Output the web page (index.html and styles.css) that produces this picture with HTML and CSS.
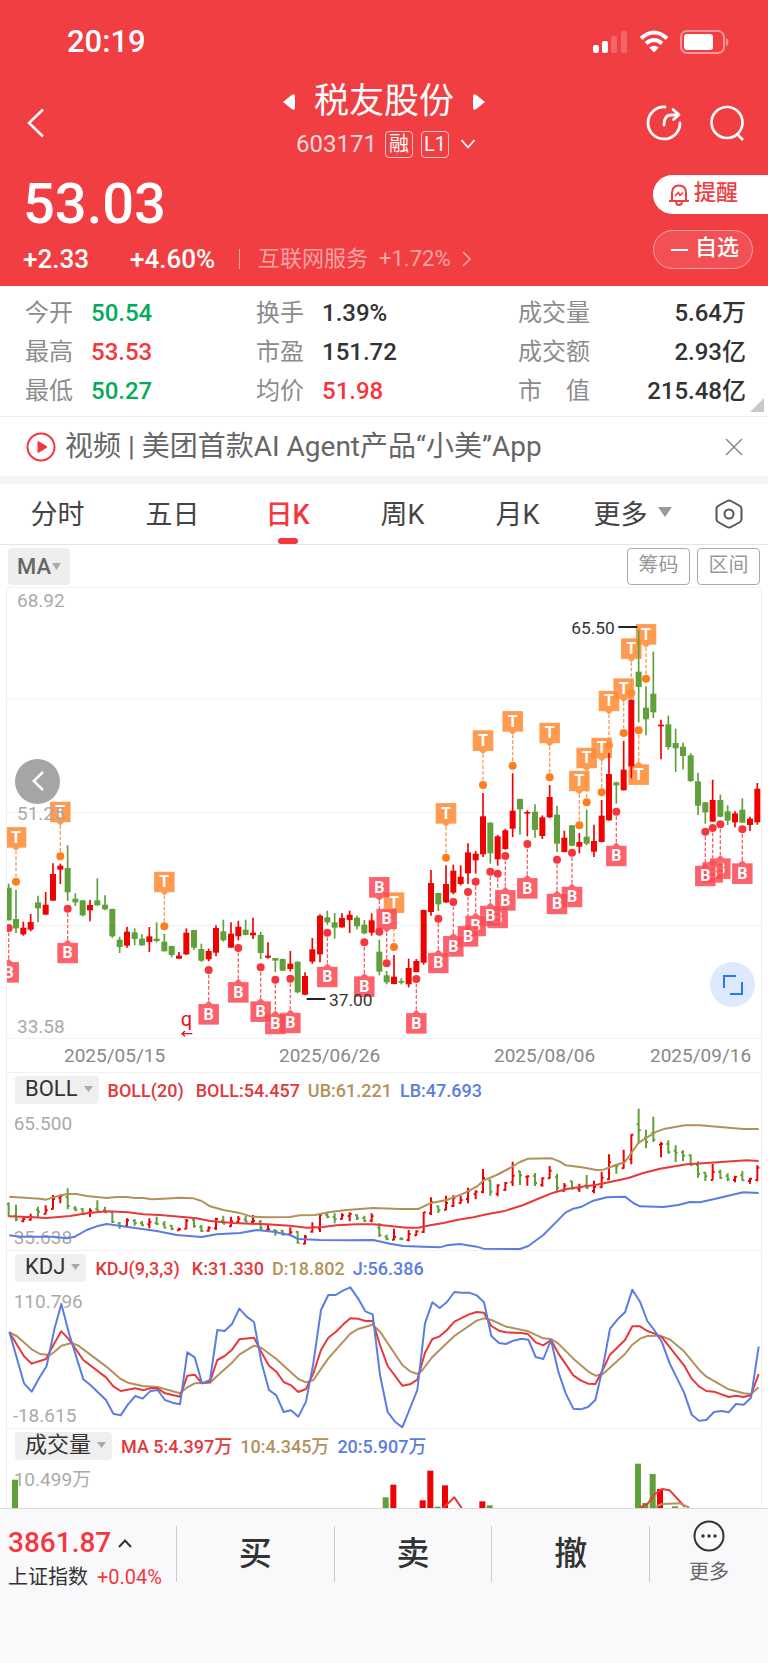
FILE: index.html
```html
<!DOCTYPE html>
<html lang="zh-CN">
<head>
<meta charset="utf-8">
<meta name="viewport" content="width=device-width, initial-scale=1">
<title>税友股份 603171</title>
<link rel="stylesheet" href="styles.css">
</head>
<body>
<header class="top">
  <div class="status">
    <span class="clock">20:19</span>
    <span class="status-icons">
      <svg width="35" height="24" viewBox="0 0 35 24" fill="#fff" aria-hidden="true"><rect x="0" y="15" width="6" height="8" rx="2"/><rect x="9" y="11" width="6" height="12" rx="2"/><g opacity=".2"><rect x="18" y="6" width="6" height="17" rx="2"/><rect x="28" y="1" width="6" height="22" rx="2"/></g></svg>
      <svg width="30" height="24" viewBox="0 0 30 24" fill="none" stroke="#fff" stroke-width="4" aria-hidden="true"><path d="M2 8.500Q15-3.500 28 8.500M7 13.500Q15 6.500 23 13.500"/><path d="M15 22.500L10.300 17.500Q15 13.800 19.700 17.500Z" fill="#fff" stroke="none"/></svg>
      <svg width="50" height="24" viewBox="0 0 50 24" aria-hidden="true"><rect x="1" y="1" width="43" height="22" rx="6" fill="none" stroke="#fff" stroke-opacity=".45" stroke-width="2"/><rect x="4" y="4" width="29" height="16" rx="3" fill="#fff"/><path d="M46 8Q48.500 9 48.500 12T46 16Z" fill="#fff" fill-opacity=".45"/></svg>
    </span>
  </div>
  <div class="title-bar">
    <button class="icon-btn back" aria-label="返回"><svg width="18" height="30" viewBox="0 0 18 30" fill="none" stroke="#fff" stroke-width="2.500"><path d="M16 1.500L2 15L16 28.500"/></svg></button>
    <div class="title">
      <div class="name-row">
        <button class="icon-btn" aria-label="上一只"><svg width="12" height="16" viewBox="0 0 12 16" fill="#fff"><path d="M0 8L9 .8Q12-.5 12 2V14Q12 16.500 9 15.200Z"/></svg></button>
        <h1>税友股份</h1>
        <button class="icon-btn" aria-label="下一只"><svg width="12" height="16" viewBox="0 0 12 16" fill="#fff"><path d="M12 8L3 .8Q0-.5 0 2V14Q0 16.500 3 15.200Z"/></svg></button>
      </div>
      <div class="code-row">
        <span class="code">603171</span><span class="tag tag-cn">融</span><span class="tag">L1</span>
        <svg class="code-more" width="16" height="10" viewBox="0 0 16 10" fill="none" stroke="#fff" stroke-width="1.800" aria-hidden="true"><path d="M1.500 1L8 8.500L14.500 1"/></svg>
      </div>
    </div>
    <div class="actions">
      <button class="icon-btn" aria-label="分享"><svg width="36" height="36" viewBox="0 0 36 36" fill="none" stroke="#fff" stroke-width="2.800" stroke-linecap="round"><path d="M19 2A16 16 0 1 0 34 18"/><path d="M18 20Q18 10 25 10H31" /><path d="M27 4.500L33 9.800L27.500 14.500" stroke-linejoin="round"/></svg></button>
      <button class="icon-btn" aria-label="搜索"><svg width="36" height="36" viewBox="0 0 36 36" fill="none" stroke="#fff" stroke-width="2.600"><circle cx="18" cy="17.500" r="15.500"/><path d="M28 29L34 35"/></svg></button>
    </div>
  </div>
  <div class="quote">
    <div class="price-box">
      <div class="price">53.03</div>
      <div class="change">
        <span class="diff">+2.33</span><span class="rate">+4.60%</span>
        <a class="sector" href="#sector"><span>互联网服务</span><span>+1.72%</span><svg width="9" height="16" viewBox="0 0 9 16" fill="none" stroke="currentColor" stroke-width="1.600"><path d="M1 1L8 8L1 15"/></svg></a>
      </div>
    </div>
    <div class="pills">
      <button class="pill pill-alert"><svg width="22" height="22" viewBox="0 0 22 22" fill="none" stroke="#f03e42" stroke-width="2"><path d="M4 16.500V9Q4 1.500 11 1.500T18 9V16.500M1 17H21"/><path d="M8 18Q8.500 21 11 21T14 18"/><path d="M7 12L10.500 8.500L12 11.500L15 8.500" stroke-width="1.600"/></svg><span>提醒</span></button>
      <button class="pill pill-watch"><svg width="19" height="22" viewBox="0 0 19 22" stroke="#fff" stroke-width="2"><path d="M1 11H18"/></svg><span>自选</span></button>
    </div>
  </div>
</header>

<section class="stats">
  <dl><dt>今开</dt><dd class="down">50.54</dd><dt>最高</dt><dd class="up">53.53</dd><dt>最低</dt><dd class="down">50.27</dd></dl>
  <dl><dt>换手</dt><dd>1.39%</dd><dt>市盈</dt><dd>151.72</dd><dt>均价</dt><dd class="up">51.98</dd></dl>
  <dl class="totals"><dt>成交量</dt><dd>5.64万</dd><dt>成交额</dt><dd>2.93亿</dd><dt>市　值</dt><dd>215.48亿</dd></dl>
  <svg class="corner" width="14" height="14" viewBox="0 0 14 14" aria-hidden="true"><path d="M14 0V14H0Z" fill="#c8c8c8"/></svg>
</section>

<section class="news">
  <a href="#news"><svg width="30" height="30" viewBox="0 0 30 30"><circle cx="15" cy="15" r="13.500" fill="none" stroke="#f5363f" stroke-width="2"/><path d="M11.500 10Q11.500 8.500 13 9.400L20.500 14Q21.800 15 20.500 16L13 20.600Q11.500 21.500 11.500 20Z" fill="#f5363f"/></svg><span>视频 | 美团首款AI Agent产品“小美”App</span></a>
  <button class="icon-btn" aria-label="关闭"><svg width="18" height="18" viewBox="0 0 18 18" stroke="#888" stroke-width="1.500"><path d="M1 1L17 17M17 1L1 17"/></svg></button>
</section>

<nav class="tabs">
  <button>分时</button><button>五日</button><button class="active">日K</button><button>周K</button><button>月K</button>
  <button>更多<svg width="14" height="10" viewBox="0 0 14 10"><path d="M0 0H14L7 10Z" fill="#999"/></svg></button>
  <button aria-label="设置"><svg width="28" height="30" viewBox="0 0 28 30" fill="none" stroke="#555" stroke-width="2"><path d="M12 2Q14 .8 16 2L25 7Q26.500 8 26.500 10V20Q26.500 22 25 23L16 28Q14 29.200 12 28L3 23Q1.500 22 1.500 20V10Q1.500 8 3 7Z"/><circle cx="14" cy="15" r="4.500"/></svg></button>
</nav>

<main>
  <div class="toolbar">
    <button class="ma">MA<svg width="9" height="7" viewBox="0 0 9 7"><path d="M0 0H9L4.500 7Z" fill="#aaa"/></svg></button>
    <span class="tools"><button>筹码</button><button>区间</button></span>
  </div>
  <div class="charts">
    <div class="plot">
      <svg id="kline" viewBox="21 22 2262 1356" role="img" aria-label="日K线"></svg>
      <button class="round prev" aria-label="向前"><svg width="12" height="20" viewBox="0 0 12 20" fill="none" stroke="#fff" stroke-width="2.500"><path d="M11 1L1.800 10L11 19"/></svg></button>
      <button class="round full" aria-label="全屏"><svg width="20" height="20" viewBox="0 0 20 20" fill="none" stroke="#2676f8" stroke-width="2"><path d="M13 1H1V13M7 19H19V7"/></svg></button>
    </div>
    <div class="dates"><span>2025/05/15</span><span>2025/06/26</span><span>2025/08/06</span><span>2025/09/16</span></div>
    <section class="panel">
      <div class="panel-head"><button class="chip">BOLL<svg width="9" height="6" viewBox="0 0 9 6"><path d="M0 0H9L4.500 6Z" fill="#aaa"/></svg></button><span class="legend"><span class="c-red lead">BOLL(20)</span><span class="c-red">BOLL:54.457</span><span class="c-tan">UB:61.221</span><span class="c-blue">LB:47.693</span></span></div>
      <svg id="boll" viewBox="21 192 2262 438" role="img" aria-label="BOLL"></svg>
    </section>
    <section class="panel">
      <div class="panel-head"><button class="chip">KDJ<svg width="9" height="6" viewBox="0 0 9 6"><path d="M0 0H9L4.500 6Z" fill="#aaa"/></svg></button><span class="legend"><span class="c-red lead">KDJ(9,3,3)</span><span class="c-red">K:31.330</span><span class="c-tan">D:18.802</span><span class="c-blue">J:56.386</span></span></div>
      <svg id="kdj" viewBox="21 96 2262 438" role="img" aria-label="KDJ"></svg>
    </section>
    <section class="panel">
      <div class="panel-head"><button class="chip">成交量<svg width="9" height="6" viewBox="0 0 9 6"><path d="M0 0H9L4.500 6Z" fill="#aaa"/></svg></button><span class="legend"><span class="c-red">MA 5:4.397万</span><span class="c-tan">10:4.345万</span><span class="c-blue">20:5.907万</span></span></div>
      <svg id="volume" viewBox="21 631 2262 144" role="img" aria-label="成交量"></svg>
    </section>
  </div>
</main>

<footer class="trade">
  <a class="index" href="#index">
    <span class="index-value">3861.87<svg width="14" height="9" viewBox="0 0 14 9" fill="none" stroke="#333" stroke-width="2"><path d="M1 8L7 1.500L13 8"/></svg></span>
    <span class="index-name">上证指数<em>+0.04%</em></span>
  </a>
  <button>买</button><button>卖</button><button>撤</button>
  <button class="more"><svg width="32" height="32" viewBox="0 0 32 32" fill="none" stroke="#333" stroke-width="2"><circle cx="16" cy="16" r="14.500"/><g fill="#333" stroke="none"><circle cx="10" cy="16" r="1.700"/><circle cx="16" cy="16" r="1.700"/><circle cx="22" cy="16" r="1.700"/></g></svg>更多</button>
</footer>
<script src="chart.js"></script>
</body>
</html>
```
FILE: styles.css
```css
* { box-sizing: border-box; }
body {
  margin: 0;
  min-height: 100vh;
  display: flex;
  flex-direction: column;
  background: #fff;
  color: #333;
  font-family: Roboto, "Noto Sans CJK SC", sans-serif;
}
button {
  margin: 0;
  padding: 0;
  border: 0;
  background: none;
  color: inherit;
  font: inherit;
}
a { color: inherit; text-decoration: none; }
svg { display: block; flex: none; }
.icon-btn { display: flex; }

/* red header */
.top { background: #f03e42; color: #fff; padding-bottom: 5px; }
.status {
  display: flex;
  align-items: center;
  justify-content: space-between;
  height: 82px;
  padding: 2px 38px 0 67px;
}
.clock { font-size: 31px; font-weight: 500; line-height: 40px; }
.status-icons { display: flex; gap: 11px; }
.title-bar {
  display: grid;
  grid-template-columns: 1fr auto 1fr;
  align-items: center;
  height: 82px;
  padding: 0 23px 0 27px;
}
.title { display: flex; flex-direction: column; align-items: center; gap: 2px; }
.name-row { display: flex; align-items: center; gap: 19px; height: 40px; padding-right: 4px; }
h1 { margin: 0; font-size: 35px; font-weight: 400; line-height: 40px; }
.code-row { display: flex; align-items: center; height: 40px; gap: 8px; }
.code { font-size: 24px; opacity: .8; }
.tag {
  width: 28px;
  height: 27px;
  border: 1px solid #fbc5c6;
  border-radius: 4px;
  font-size: 20px;
  line-height: 25px;
  text-align: center;
}
.code-more { margin-left: 3px; }
.actions { display: flex; justify-content: flex-end; gap: 27px; }
.quote { display: flex; justify-content: space-between; }
.price-box { padding: 8px 0 0 23px; }
.price { font-size: 56px; font-weight: 500; line-height: 64px; }
.change { display: flex; align-items: center; height: 45px; font-size: 26px; font-weight: 500; }
.diff { width: 107px; }
.rate { width: 109px; }
.sector {
  display: flex;
  align-items: center;
  gap: 11px;
  color: #f8a4a5;
  font-size: 22px;
  font-weight: 400;
  line-height: 28px;
}
.sector::before { content: ""; width: 1px; height: 20px; margin-right: 7px; background: #f8a4a5; }
.pills { display: flex; flex-direction: column; gap: 16px; width: 115px; padding-top: 11px; }
.pill { display: flex; align-items: center; height: 39px; font-size: 22px; font-weight: 500; gap: 4px; line-height: 28px; }
.pill span { padding-bottom: 4px; }
.pill-alert { border-radius: 20px 0 0 20px; padding-left: 15px; background: #fff; color: #f03e42; }
.pill-watch {
  width: 100px;
  border: 1px solid #f7a0a2;
  border-radius: 20px;
  padding-left: 16px;
  gap: 6px;
  background: #f25054;
}

/* key figures */
.stats {
  position: relative;
  display: grid;
  grid-template-columns: 231px 1fr 228px;
  padding: 7px 22px 6px 25px;
  border-bottom: 1px solid #eee;
}
.stats dl {
  display: grid;
  grid-template-columns: 66px 1fr;
  grid-auto-rows: 39px;
  align-items: center;
  margin: 0;
  line-height: 36px;
}
.stats dt { color: #8c8c8c; font-size: 24px; }
.stats dd { margin: 0; font-size: 24px; font-weight: 500; }
.stats .totals { grid-template-columns: 80px 1fr; }
.totals dd { text-align: right; }
.stats .up { color: #f5363f; }
.stats .down { color: #04ab5b; }
.corner { position: absolute; right: 4px; bottom: 4px; }

.news {
  display: flex;
  align-items: center;
  justify-content: space-between;
  height: 67px;
  padding: 0 25px 0 26px;
  border-bottom: 8px solid #f1f4f8;
}
.news a { display: flex; align-items: center; gap: 9px; color: #666; font-size: 28px; line-height: 40px; }

.tabs {
  display: grid;
  grid-template-columns: repeat(6, 1fr) 78px;
  height: 61px;
  border-bottom: 1px solid #e4e4e4;
  font-size: 27px;
}
.tabs button { position: relative; display: flex; align-items: center; justify-content: center; gap: 10px; padding-bottom: 4px; color: #444; }
.tabs button:last-child { padding-bottom: 0; }
.tabs .active { color: #f5363f; font-weight: 500; }
.tabs .active::after {
  content: "";
  position: absolute;
  bottom: 0;
  width: 20px;
  height: 6px;
  border-radius: 3px;
  background: #f5363f;
}

/* charts */
.toolbar { display: flex; align-items: center; justify-content: space-between; height: 42px; padding: 0 8px; }
.ma {
  display: flex;
  align-items: center;
  justify-content: center;
  gap: 1px;
  width: 62px;
  height: 37px;
  border-radius: 4px;
  background: #eee;
  color: #666;
  font-size: 22px;
  font-weight: 500;
}
.tools { display: flex; gap: 7px; }
.tools button { width: 63px; height: 37px; padding-bottom: 2px; border: 1px solid #aaa; border-radius: 4px; color: #999; font-size: 20px; line-height: 28px; }
.charts { margin: 0 6px; border: solid #f0f0f0; border-width: 0 1px; }
.charts > div > svg, .panel > svg { width: 100%; height: auto; overflow: hidden; }
.plot { position: relative; }
.round {
  position: absolute;
  display: flex;
  align-items: center;
  justify-content: center;
  width: 45px;
  height: 45px;
  border-radius: 50%;
}
.prev { left: 8px; top: 38%; background: #a5a5a5; }
.full { right: 6px; bottom: 7%; background: #dfe9fd; }
.dates {
  display: grid;
  grid-template-columns: 215fr 215fr 156fr 111fr;
  height: 33px;
  padding-left: 57px;
  color: #888;
  font-size: 19px;
  line-height: 34px;
}
.panel-head {
  display: flex;
  align-items: flex-end;
  height: 32px;
  padding-left: 8px;
  border-top: 1px solid #f0f0f0;
  gap: 9px;
}
.chip {
  display: flex;
  align-items: center;
  gap: 6px;
  height: 28px;
  padding: 0 6px 2px 10px;
  border-radius: 4px;
  background: #efefef;
  font-size: 22px;
  line-height: 26px;
}
.legend { display: flex; gap: 8px; font-size: 18px; font-weight: 500; line-height: 26px; }
.lead { margin-right: 4px; }
.c-red { color: #e2383c; }
.c-tan { color: #b3915b; }
.c-blue { color: #5b7de2; }

/* chart drawing */
.grid { stroke: #f0f0f0; stroke-width: 3; }
.axis { fill: #aaa; font-size: 57px; }
.callout { fill: #333; font-size: 52px; }
.callout-line { stroke: #222; stroke-width: 6; }
.note { fill: #e8111a; font-size: 60px; }
.note-line { fill: none; stroke: #e8111a; stroke-width: 4; }
.up-bar { fill: #ee0303; stroke: #ee0303; }
.down-bar { fill: #60a03a; stroke: #60a03a; }
.up-bar rect, .down-bar rect { stroke: none; }
.wick { stroke-width: 5; }
.ohlc { fill: none; stroke-width: 6; }
.curve { fill: none; stroke-width: 6; stroke-linejoin: round; }
.s-red { stroke: #e8383c; }
.s-tan { stroke: #b3915b; }
.s-blue { stroke: #5b7de2; }
.mark-T { fill: #ff8b37; stroke: #ff9a50; }
.mark-B { fill: #fa4b55; stroke: #fb6069; }
.mark-T circle { fill: #ff7d1c; }
.mark-B circle { fill: #f5363f; }
.mark-T circle, .mark-B circle { stroke: none; }
.stem { stroke-width: 4; stroke-dasharray: 11 6; }
.badge { stroke: #fff; stroke-opacity: .5; stroke-width: 1; fill-opacity: .87; }
.badge-text { fill: #fff; stroke: none; font-size: 48px; font-weight: 700; text-anchor: middle; }

/* bottom bar */
.trade {
  flex: 1;
  display: grid;
  grid-template-columns: 176px 1fr 1fr 1fr 119px;
  align-items: start;
  padding-top: 17px;
  border-top: 1px solid #d8dadd;
  background: #f9f9fc;
}
.trade > * { height: 56px; }
.trade > button { border-left: 1px solid #ccc; font-size: 33px; font-weight: 500; line-height: 56px; }
.index { display: flex; flex-direction: column; padding-left: 8px; }
.index-value { display: flex; align-items: center; gap: 7px; color: #f5363f; font-size: 28px; font-weight: 500; line-height: 34px; }
.index-name { display: flex; align-items: center; gap: 9px; font-size: 20px; line-height: 34px; white-space: nowrap; }
.index-name em { color: #f5363f; font-style: normal; }
.trade > .more {
  display: flex;
  flex-direction: column;
  align-items: center;
  gap: 6px;
  color: #666;
  font-size: 20px;
  font-weight: 400;
  line-height: 28px;
}
.more svg { margin-top: -6px; }
```
FILE: chart.js
```js
// Each candle: direction (1 up, 0 down), high, body top, body bottom, low.
const candles = [
[0,912,924,1022,1022],[0,930,1018,1046,1060],[1,1026,1044,1064,1068],[1,1003,1027,1050,1055],[0,948,968,986,1028],
[1,937,975,1005,1005],[1,851,883,963,963],[1,852,858,870,913],[0,797,865,938,964],[0,941,957,968,979],
[0,961,962,1007,1010],[1,961,976,992,1025],[0,896,962,977,978],[0,947,975,989,992],[0,987,988,1070,1075],
[0,1071,1080,1102,1120],[1,1041,1056,1098,1104],[0,1046,1058,1078,1097],[0,1064,1077,1097,1098],[1,1042,1070,1087,1117],
[0,1028,1077,1084,1088],[0,1062,1086,1115,1115],[0,1098,1099,1126,1133],[1,1117,1128,1137,1137],[1,1046,1059,1124,1126],
[0,1050,1051,1104,1111],[0,1092,1108,1143,1147],[1,1107,1114,1139,1145],[1,1037,1045,1119,1130],[0,1020,1055,1082,1086],
[1,1028,1062,1104,1104],[1,1023,1041,1070,1082],[0,1020,1050,1066,1067],[1,1014,1059,1067,1078],[0,1056,1066,1120,1138],
[1,1088,1128,1134,1137],[0,1135,1135,1143,1177],[0,1137,1138,1173,1174],[1,1114,1152,1168,1175],[0,1145,1146,1238,1241],
[1,1178,1189,1245,1247],[1,1075,1109,1146,1152],[1,1004,1008,1124,1148],[0,993,1013,1028,1035],[0,1000,1028,1044,1077],
[1,1001,1015,1043,1044],[1,993,1005,1021,1060],[0,1008,1014,1040,1049],[0,1021,1035,1061,1064],[1,1001,1022,1059,1068],
[0,1080,1116,1176,1187],[0,1174,1187,1208,1214],[1,1126,1191,1213,1214],[0,1196,1204,1208,1214],[1,1137,1165,1214,1223],
[1,1138,1144,1177,1178],[1,990,991,1149,1155],[1,871,910,997,1008],[0,939,940,974,994],[1,857,913,968,970],
[1,855,873,939,944],[1,857,891,913,917],[1,791,818,881,913],[1,814,822,842,882],[1,640,710,824,832],
[0,728,729,821,852],[1,766,770,839,858],[1,747,752,808,810],[1,581,693,747,772],[0,657,658,689,765],
[1,692,697,702,770],[0,674,696,751,774],[1,707,713,769,778],[1,616,652,713,715],[0,678,705,792,817],
[1,753,774,817,818],[0,736,737,798,800],[1,760,787,801,821],[0,690,771,792,796],[1,735,784,816,832],
[1,661,708,787,788],[1,520,583,722,723],[0,606,608,617,672],[1,484,570,632,632],[1,359,360,560,596],
[0,150,276,322,428],[0,320,384,419,467],[0,216,342,398,415],[1,420,435,440,539],[0,408,434,502,510],
[0,447,490,506,577],[0,489,501,529,569],[0,521,527,604,607],[0,579,605,678,706],[0,667,668,698,732],
[1,600,661,726,726],[0,645,661,711,713],[0,677,695,723,736],[1,695,701,728,743],[0,656,690,729,729],
[1,711,717,736,754],[1,610,627,728,735]
];
const STEP = 22.24;
const xAt = i => Math.round(25.5 + i * STEP);

// Signals: letter, candle index, dot position, side of the badge (-1 above, 1 below).
const marks = [
['B',99,749,1],['B',96,734,1],['B',95,745,1],['B',94,756,1],['B',82,696,1],['B',76,819,1],['B',74,840,1],['B',70,793,1],
['B',66,882,1],['B',67,829,1],['B',65,876,1],['B',63,906,1],['B',62,937,1],['B',60,967,1],['B',58,1017,1],['B',55,1198,1],
['T',52,1102,-1],['B',51,1151,-1],['B',50,1056,-1],['B',48,1088,1],['B',43,1059,1],['B',38,1197,1],['B',36,1200,1],['B',34,1163,1],
['B',31,1105,1],['B',27,1171,1],['B',8,987,1],['B',0,1045,1],
['T',86,297,-1],['T',85,452,1],['T',84,340,-1],['T',83,460,-1],['T',81,497,-1],['T',80,638,-1],['T',78,668,-1],['T',77,737,-1],
['T',73,593,-1],['T',68,558,-1],['T',64,616,-1],['T',59,834,-1],['T',21,1040,-1],['T',7,830,-1],['T',1,906,-1]
];

const text = (cls, x, y, s) => `<text class="${cls}" x="${x}" y="${y}">${s}</text>`;
const curve = (cls, pts) => `<polyline class="curve ${cls}" points="${pts}"/>`;

function drawMark([letter, i, y, side]) {
  const x = xAt(i);
  const near = y + side * 102, far = y + side * 164, tip = y + side * 92;
  return `<g class="mark-${letter}"><path class="stem" d="M${x} ${y + side * 14}V${tip}"/>` +
    `<path class="badge" d="M${x - 31} ${near}H${x - 11}L${x} ${tip}L${x + 11} ${near}H${x + 31}V${far}H${x - 31}Z"/>` +
    `<circle cx="${x}" cy="${y}" r="12"/>` +
    text('badge-text', x, (near + far) / 2 + 16, letter) + '</g>';
}

function drawCandle([up, high, top, bottom, low], i) {
  const x = xAt(i);
  return `<g class="${up ? 'up-bar' : 'down-bar'}"><path class="wick" d="M${x} ${high}V${low}"/>` +
    `<rect x="${x - 9}" y="${top}" width="18" height="${Math.max(bottom - top, 5)}"/></g>`;
}

let kline = [358, 698, 1037, 1376, 23].map(y => `<path class="grid" d="M21 ${y}H2283"/>`).join('');
kline += marks.map(drawMark).join('') + candles.map(drawCandle).join('');
kline += text('axis', 51, 83, '68.92') + text('axis', 51, 721, '51.25') + text('axis', 51, 1360, '33.58');
kline += text('callout', 1714, 163, '65.50') + '<path class="callout-line" d="M1855 142H1912"/>';
kline += text('callout', 987, 1279, '37.00') + '<path class="callout-line" d="M920 1258H976"/>';
kline += text('note', 542, 1338, 'q') + '<path class="note-line" d="M577 1362H546M555 1354L546 1362L555 1370"/>';
document.getElementById('kline').innerHTML = kline;

const bollY = y => Math.round(207 + (y - 150) * 0.369);
let boll = text('axis', 41, 270, '65.500') + text('axis', 41, 612, '35.638');
boll += candles.map(([up, high, top, bottom, low], i) => {
  const x = xAt(i), open = bollY(up ? bottom : top), close = bollY(up ? top : bottom);
  return `<path class="ohlc ${up ? 'up-bar' : 'down-bar'}" d="M${x} ${bollY(high) - 1}V${bollY(low) + 1}M${x - 6} ${open}H${x}M${x} ${close}H${x + 6}"/>`;
}).join('');
boll += curve('s-tan', '28,470 120,476 138,479 158,473 180,466 205,462 230,462 260,468 320,474 350,471 380,471 405,474 430,474 455,478 490,476 540,473 580,475 605,483 630,499 670,510 715,518 755,530 800,532 870,531 900,526 945,525 985,517 1040,510 1080,507 1120,504 1200,507 1255,507 1290,490 1340,480 1390,461 1430,440 1450,422 1490,405 1530,384 1560,366 1585,356 1655,355 1680,365 1697,376 1745,382 1790,390 1810,389 1840,378 1875,366 1915,309 1940,293 1970,275 1995,266 2055,256 2100,256 2160,261 2230,267 2276,267');
boll += curve('s-red', '28,529 100,532 140,534 210,528 260,520 320,514 385,517 430,523 480,525 540,530 590,535 630,543 700,549 800,553 870,557 920,563 970,561 1010,556 1070,553 1120,553 1170,558 1220,563 1255,563 1290,556 1330,549 1370,540 1420,532 1460,523 1510,514 1570,495 1620,474 1660,458 1700,447 1740,441 1790,434 1830,426 1885,414 1930,399 1980,386 2060,373 2120,369 2240,361 2276,363');
boll += curve('s-blue', '28,586 60,590 160,590 200,595 225,590 260,570 290,559 320,552 400,563 470,573 530,585 605,591 650,583 720,579 770,570 820,575 870,585 895,597 960,600 1040,601 1120,600 1170,611 1210,618 1270,620 1320,622 1340,616 1380,612 1430,620 1450,626 1560,627 1585,618 1630,585 1670,545 1697,517 1720,506 1745,500 1780,482 1820,472 1875,470 1900,489 1920,499 1990,501 2035,495 2070,486 2100,487 2140,478 2230,457 2276,459');
document.getElementById('boll').innerHTML = boll;

let kdj = text('axis', 41, 175, '110.796') + text('axis', 38, 517, '-18.615');
kdj += curve('s-tan', '28,247 50,258 95,298 120,312 150,315 163,306 184,287 215,279 235,287 318,349 362,387 384,398 428,408 473,411 540,430 562,412 584,400 630,398 652,377 696,338 718,314 762,287 785,294 829,327 895,387 918,397 940,390 985,325 1051,251 1074,237 1118,224 1140,245 1207,345 1230,364 1252,372 1265,363 1297,321 1363,258 1430,212 1452,205 1474,210 1518,230 1585,244 1630,265 1653,267 1675,281 1720,326 1764,364 1786,377 1808,373 1875,312 1897,284 1920,266 1942,258 1980,257 2009,268 2052,304 2097,359 2119,380 2186,418 2231,430 2253,432 2276,412');
kdj += curve('s-red', '28,247 72,319 95,341 138,327 163,280 184,244 207,268 250,330 318,382 340,409 362,423 406,415 430,421 453,414 473,415 495,430 540,440 562,377 584,374 606,400 630,395 652,330 674,318 696,299 718,268 762,263 785,308 807,347 829,365 851,396 873,406 895,426 918,417 940,370 963,300 985,263 1007,246 1030,223 1051,205 1074,206 1096,213 1118,213 1140,285 1163,348 1207,407 1230,403 1252,389 1275,308 1297,267 1319,259 1341,240 1363,215 1407,193 1430,186 1452,188 1474,228 1497,242 1518,247 1565,249 1585,253 1607,277 1630,286 1653,270 1675,310 1720,376 1742,391 1764,401 1786,402 1808,360 1830,314 1875,270 1897,229 1920,229 1942,243 1964,251 1986,262 2052,346 2075,386 2097,409 2119,423 2142,425 2186,441 2208,437 2231,441 2253,435 2276,372');
kdj += curve('s-blue', '28,245 72,400 95,425 118,383 140,348 163,238 184,162 207,250 250,388 272,406 318,450 340,491 362,496 384,463 406,438 428,446 450,424 473,420 495,450 517,458 540,463 562,307 584,322 606,400 630,390 652,240 674,243 696,222 718,176 740,200 762,216 785,340 807,420 829,436 851,486 873,481 895,500 918,455 940,340 963,180 985,135 1007,135 1030,121 1051,112 1074,145 1096,184 1118,193 1140,375 1163,486 1185,515 1207,532 1252,420 1275,220 1297,157 1319,174 1341,156 1363,126 1385,128 1407,128 1430,136 1452,157 1474,258 1497,279 1518,282 1540,272 1565,266 1585,269 1607,321 1630,327 1653,270 1675,365 1697,430 1720,476 1742,478 1764,471 1786,450 1808,355 1830,236 1853,208 1875,187 1897,119 1920,155 1942,213 1964,242 1986,277 2009,340 2052,427 2075,494 2097,512 2119,510 2142,486 2164,483 2186,487 2208,462 2231,464 2253,443 2276,290');
document.getElementById('kdj').innerHTML = kdj;

const bars = [[0,45,690],[0,1157,743],[1,1180,705],[1,1268,752],[1,1291,663],[0,1313,771],[1,1335,707],[1,1447,755],[0,1469,767],[0,1914,642],[0,1936,760],[0,1958,673],[1,1980,718],[0,2025,770]];
let volume = text('axis', 41, 708, '10.499万');
volume += bars.map(([up, x, y]) => `<g class="${up ? 'up-bar' : 'down-bar'}"><rect x="${x - 9}" y="${y}" width="18" height="${775 - y}"/></g>`).join('');
volume += curve('s-red', '1330,775 1363,743 1385,775') + curve('s-red', '1918,775 1942,763 1965,733 1986,718 2009,722 2055,772');
volume += curve('s-tan', '1965,772 1986,763 2040,761 2068,774');
document.getElementById('volume').innerHTML = volume;
```
